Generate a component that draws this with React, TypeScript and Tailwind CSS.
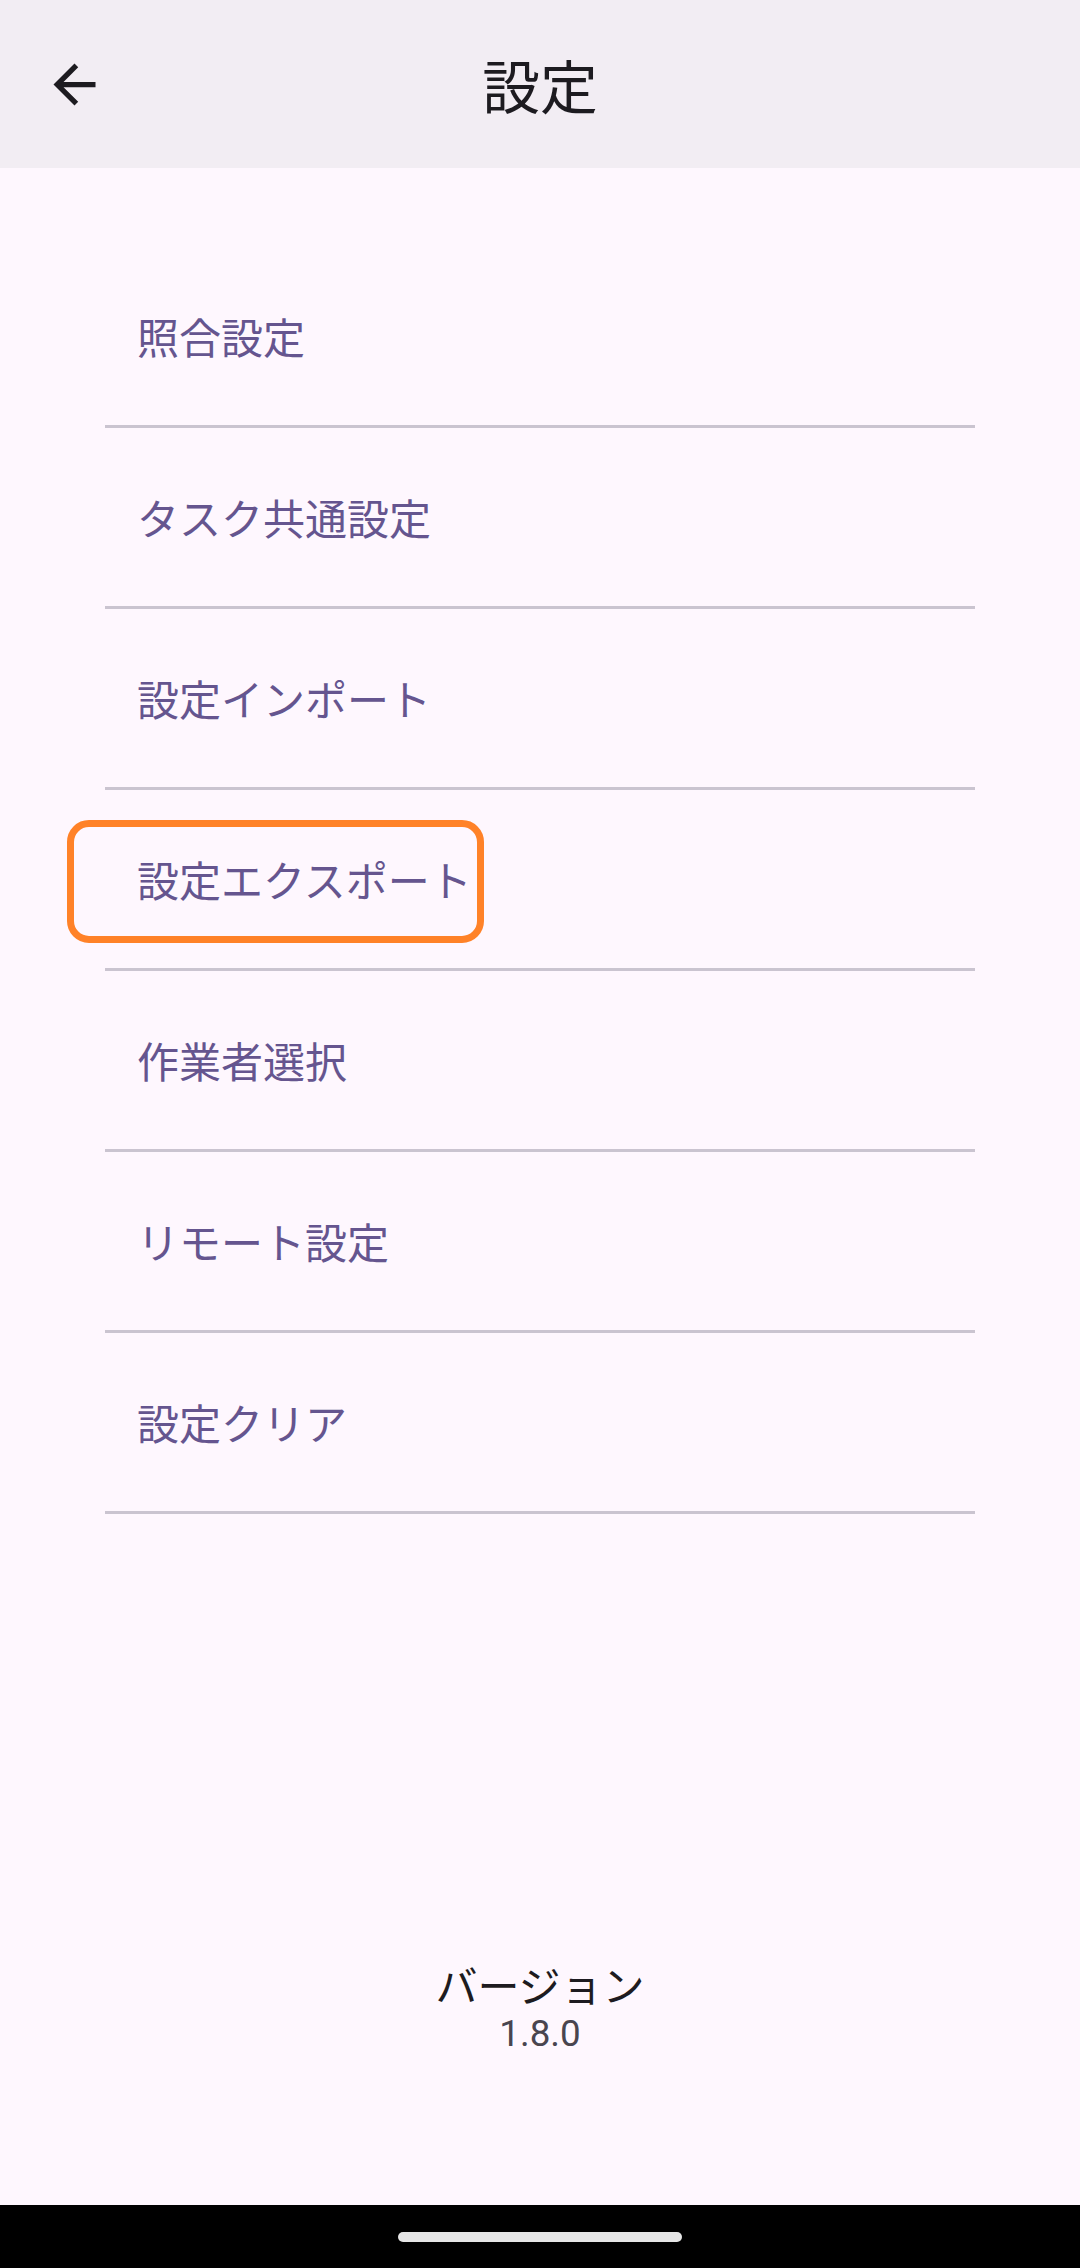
const items = [
  "照合設定",
  "タスク共通設定",
  "設定インポート",
  "設定エクスポート",
  "作業者選択",
  "リモート設定",
  "設定クリア",
];

export default function App() {
  return (
    <div className="flex h-[2268px] w-[1080px] flex-col overflow-hidden bg-[#fef7fe] font-['Noto_Sans_CJK_JP',sans-serif]">
      {/* Top bar */}
      <header className="flex h-[168px] shrink-0 items-center bg-[#f2edf3] px-[43px]">
        <button className="flex h-[63px] w-[63px] items-center justify-center text-[#1d1b20]">
          <svg viewBox="0 0 24 24" className="h-[63px] w-[63px]" fill="currentColor">
            <path d="M20 11H7.83l5.59-5.59L12 4l-8 8 8 8 1.41-1.41L7.83 13H20v-2z" />
          </svg>
        </button>
        <h1 className="flex-1 text-center text-[57.75px] leading-[76px] text-[#1d1b20]">
          設定
        </h1>
        <div className="w-[63px]" />
      </header>

      {/* Menu */}
      <ul className="px-[105px] pt-[79px]">
        {items.map((label, i) => (
          <li
            key={label}
            className="relative flex h-[181px] items-center border-b-[3px] border-[#cac4d0] pl-[32px] text-[42px] leading-[56px] text-[#65558f]"
          >
            {label}
            {i === 3 && (
              <span className="absolute left-[-38px] top-[30px] h-[123px] w-[417px] rounded-[22px] border-[7px] border-[#ff8228]" />
            )}
          </li>
        ))}
      </ul>

      {/* Version */}
      <div className="mt-auto flex flex-col items-center pb-[149px]">
        <span className="text-[42px] leading-[56px] text-[#1d1b20]">バージョン</span>
        <span className="font-['Roboto',sans-serif] text-[36.75px] leading-[44px] text-[#49454f]">
          1.8.0
        </span>
      </div>

      {/* Gesture bar */}
      <div className="flex h-[63px] shrink-0 justify-center bg-black pt-[27px]">
        <div className="h-[10px] w-[284px] rounded-full bg-[#e6e6e6]" />
      </div>
    </div>
  );
}
